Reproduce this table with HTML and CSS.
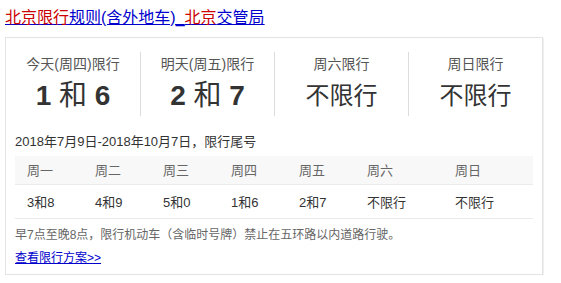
FILE: index.html
```html
<!DOCTYPE html>
<html lang="zh-CN">
<head>
<meta charset="utf-8">
<title>北京限行规则</title>
<link rel="stylesheet" href="styles.css">
</head>
<body>
<div class="result">
  <h3 class="title"><a href="#"><em>北京限行</em>规则(含外地车)_<em>北京</em>交管局</a></h3>
  <div class="card">
    <div class="top">
      <div class="col">
        <div class="label">今天(周四)限行</div>
        <div class="num"><b>1</b> 和 <b>6</b></div>
      </div>
      <div class="col">
        <div class="label">明天(周五)限行</div>
        <div class="num"><b>2</b> 和 <b>7</b></div>
      </div>
      <div class="col">
        <div class="label">周六限行</div>
        <div class="num free">不限行</div>
      </div>
      <div class="col">
        <div class="label">周日限行</div>
        <div class="num free">不限行</div>
      </div>
    </div>
    <div class="body">
      <div class="range">2018年7月9日-2018年10月7日，限行尾号</div>
      <table class="week">
        <colgroup>
          <col class="c68"><col class="c68"><col class="c68"><col class="c68"><col class="c68"><col class="c88"><col class="c90">
        </colgroup>
        <thead>
          <tr><th>周一</th><th>周二</th><th>周三</th><th>周四</th><th>周五</th><th>周六</th><th>周日</th></tr>
        </thead>
        <tbody>
          <tr><td>3和8</td><td>4和9</td><td>5和0</td><td>1和6</td><td>2和7</td><td>不限行</td><td>不限行</td></tr>
        </tbody>
      </table>
      <p class="note">早7点至晚8点，限行机动车（含临时号牌）禁止在五环路以内道路行驶。</p>
      <a class="more" href="#">查看限行方案&gt;&gt;</a>
    </div>
  </div>
</div>
</body>
</html>
```

FILE: styles.css
```css
* { box-sizing: border-box; }
html, body {
  margin: 0;
  padding: 0;
  background: #fff;
}
body {
  font-family: "Liberation Sans", Arial, "Noto Sans CJK SC", sans-serif;
  color: #333;
}
.result {
  padding: 8px 0 0 5px;
}
.title {
  margin: 0;
  font-size: 16px;
  font-weight: normal;
  line-height: 20px;
  height: 20px;
}
.title a {
  color: #00c;
  text-decoration: underline;
}
.title em {
  font-style: normal;
  color: #c00;
}
.card {
  margin-top: 9px;
  width: 538px;
  border: 1px solid #e3e3e3;
  box-shadow: 1px 1px 0 #efefef;
  padding-bottom: 6px;
}
.top {
  display: grid;
  grid-template-columns: repeat(4, 1fr);
  padding-top: 14px;
}
.col {
  height: 64px;
  text-align: center;
}
.col + .col {
  border-left: 1px solid #dcdcdc;
}
.label {
  font-size: 14px;
  line-height: 20px;
  color: #555;
  padding-top: 2px;
}
.num {
  margin-top: 4px;
  font-size: 28px;
  line-height: 36px;
  color: #333;
}
.num b {
  font-weight: bold;
}
.num.free {
  font-size: 24px;
}
.body {
  padding: 0 8px 0 9px;
}
.range {
  margin-top: 16px;
  font-size: 13px;
  line-height: 20px;
  color: #333;
}
.week {
  margin-top: 4px;
  width: 518px;
  border-collapse: collapse;
  table-layout: fixed;
  font-size: 13px;
}
.c68 { width: 68px; }
.c88 { width: 88px; }
.c90 { width: 90px; }
.week th {
  height: 28px;
  padding: 0 0 0 12px;
  text-align: left;
  font-weight: normal;
  color: #666;
  background: #f8f8f8;
  border-bottom: 1px solid #ebebeb;
}
.week td {
  height: 34px;
  padding: 0 0 0 12px;
  color: #333;
  border-bottom: 1px solid #ebebeb;
}
.note {
  margin: 6px 0 0;
  font-size: 12px;
  line-height: 20px;
  color: #666;
}
.more {
  display: inline-block;
  margin-top: 3px;
  font-size: 12px;
  line-height: 20px;
  color: #00c;
  text-decoration: underline;
}
```
